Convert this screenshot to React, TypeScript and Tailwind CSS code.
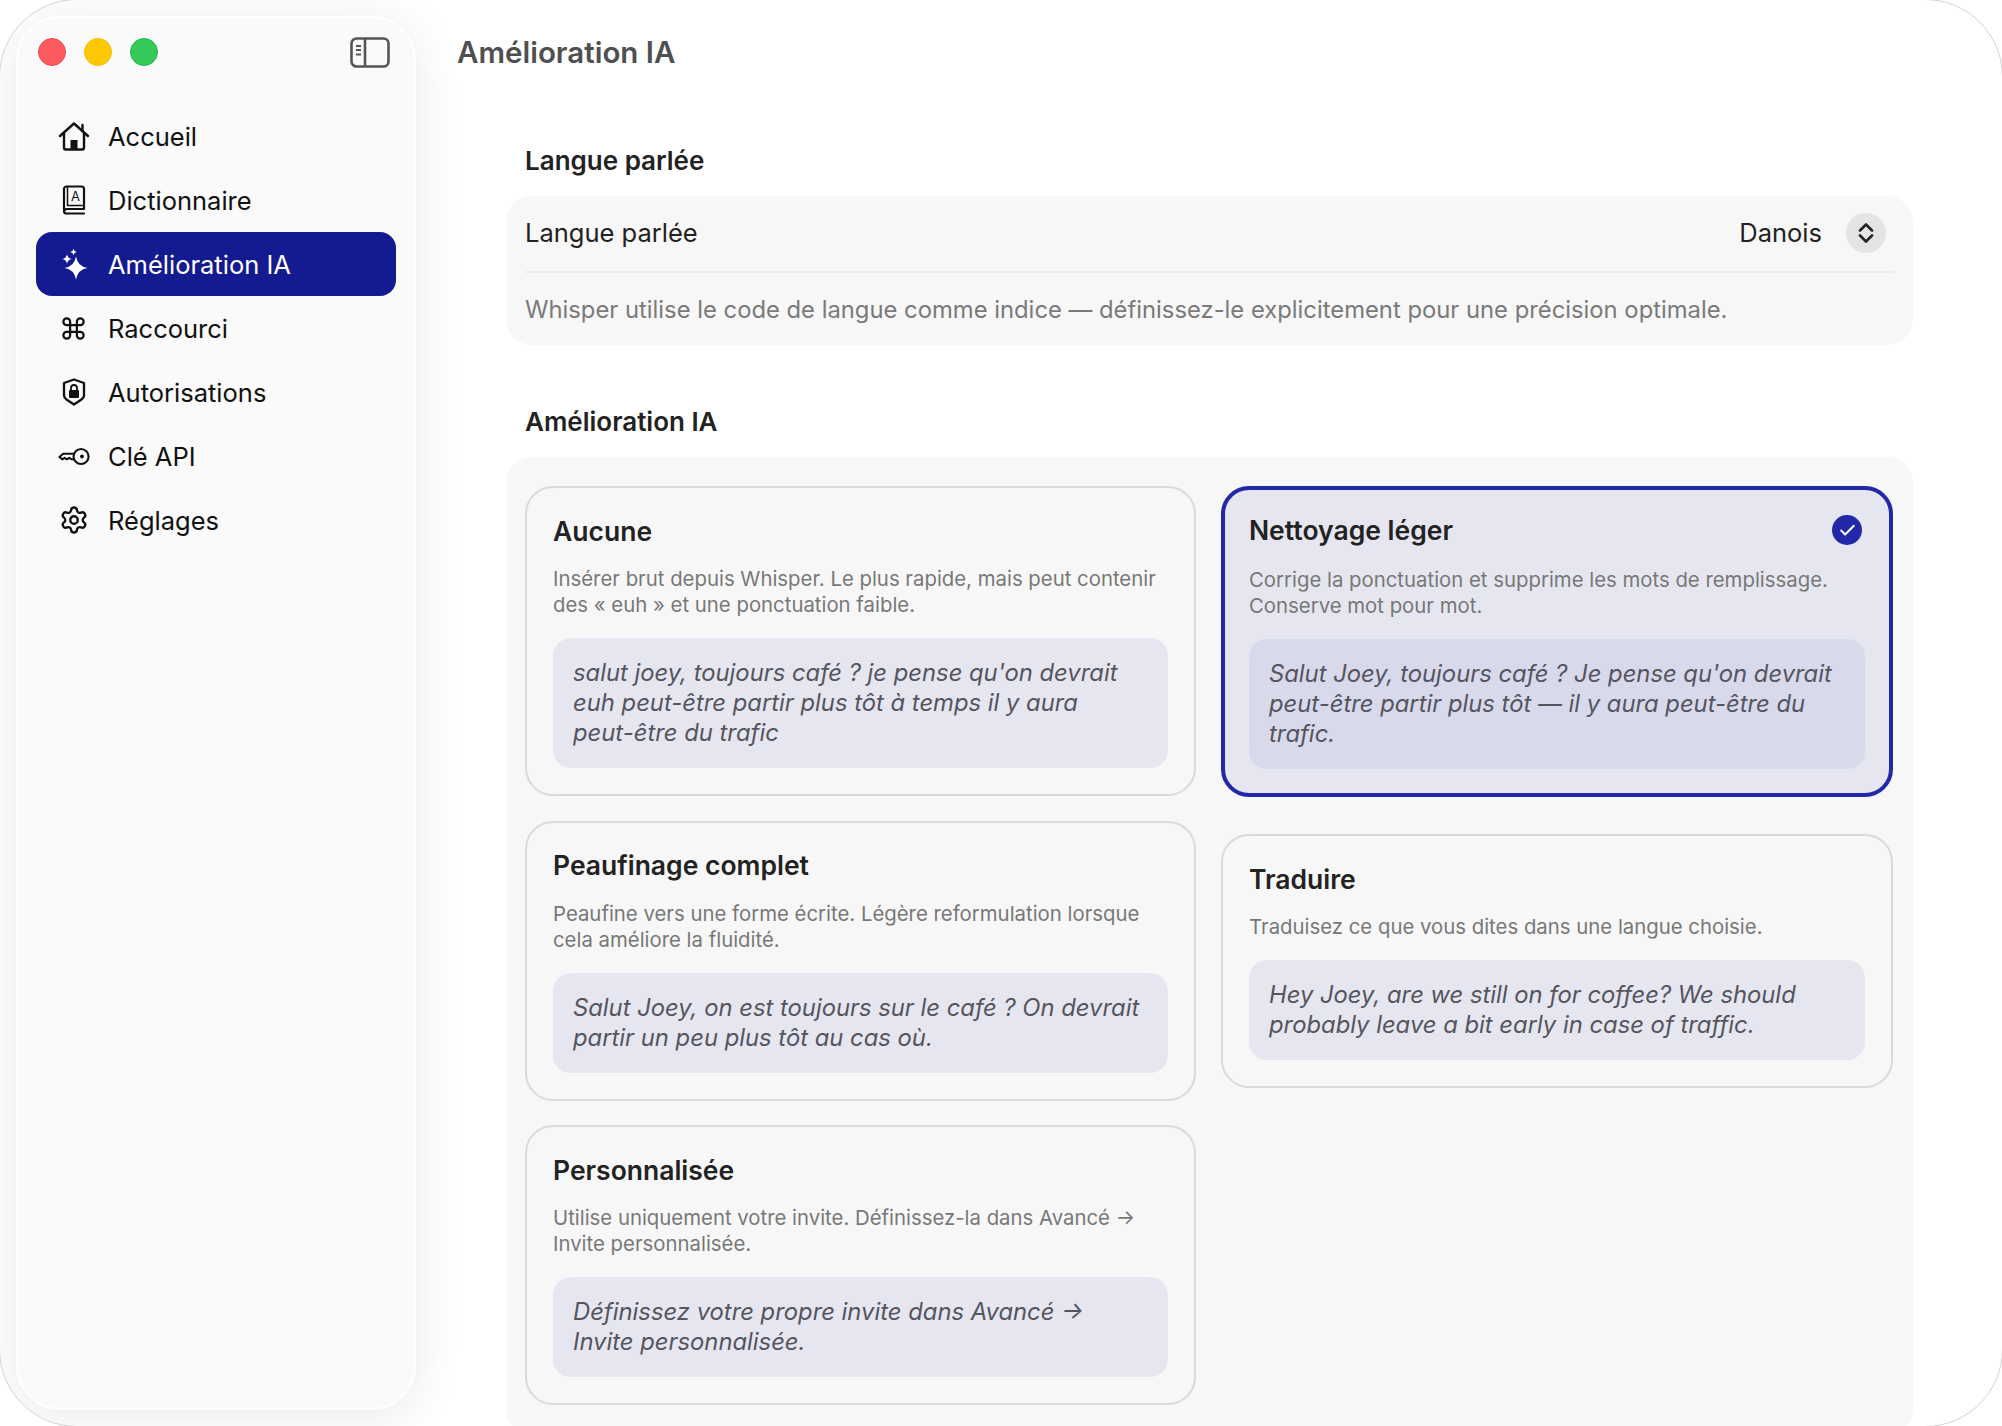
import type { ReactNode } from "react";
import { Check, Command, Settings } from "lucide-react";

function HomeIcon() {
  return (
    <svg width="32" height="30" viewBox="0 0 32 30" fill="none" stroke="currentColor" strokeWidth="2.4" strokeLinecap="round" strokeLinejoin="round">
      <path d="M2 15 16 2.500 30 15" />
      <path d="M24.500 4v6" />
      <path d="M6 12v14.500a2 2 0 0 0 2 2h16a2 2 0 0 0 2-2V12" />
      <rect x="12.500" y="19" width="7" height="9.500" fill="currentColor" stroke="none" />
    </svg>
  );
}

function BookIcon() {
  return (
    <svg width="24" height="30" viewBox="0 0 24 30" fill="none" stroke="currentColor" strokeWidth="2.200" strokeLinecap="round" strokeLinejoin="round">
      <path d="M2 25V4a2.500 2.500 0 0 1 2.500-2.500h15A2.500 2.500 0 0 1 22 4v20H5a3 3 0 0 0-3 2.500A2.500 2.500 0 0 0 4.500 28.500H22" />
      <path d="M5.500 2v18.500H22" strokeWidth="1.500" />
      <text x="13.500" y="16" fontSize="13" fontFamily="Inter, sans-serif" textAnchor="middle" fill="currentColor" stroke="none">
        A
      </text>
    </svg>
  );
}

function star(cx: number, cy: number, r: number) {
  const k = r * 0.14;
  return `M${cx} ${cy - r}Q${cx + k} ${cy - k} ${cx + r} ${cy}Q${cx + k} ${cy + k} ${cx} ${cy + r}Q${cx - k} ${cy + k} ${cx - r} ${cy}Q${cx - k} ${cy - k} ${cx} ${cy - r}Z`;
}

function SparkleIcon() {
  return (
    <svg width="30" height="32" viewBox="0 0 30 32" fill="currentColor">
      <path d={star(17, 20, 11.500)} />
      <path d={star(8, 11, 4.800)} />
      <path d={star(14.500, 4, 3.300)} />
    </svg>
  );
}

function ShieldIcon() {
  return (
    <svg width="24" height="28" viewBox="0 0 24 28" fill="none" stroke="currentColor" strokeWidth="2.300" strokeLinejoin="round">
      <path d="M12 1.500 22 5v12.500c0 2-1 3-2.500 4L12 26.500l-7.500-5C3 20.500 2 19.500 2 17.500V5Z" />
      <rect x="7" y="12" width="10" height="8" rx="1" fill="currentColor" stroke="none" />
      <path d="M9 12.500V10a3 3 0 0 1 6 0v2.500" strokeWidth="1.800" />
    </svg>
  );
}

function KeyIcon() {
  return (
    <svg width="32" height="19" viewBox="0 0 34 20" fill="none" stroke="currentColor" strokeWidth="2.200" strokeLinecap="round" strokeLinejoin="round">
      <circle cx="24.500" cy="10" r="8" />
      <circle cx="25.500" cy="10" r="2" fill="currentColor" stroke="none" />
      <path d="M17 7H5.500L1.500 10.500l3 2.500 2.500-1.500 2.500 1.500 2.500-1.500 2.500 1.500H17" />
    </svg>
  );
}

function PanelToggleIcon() {
  return (
    <svg width="40" height="31" viewBox="0 0 40 31" fill="none" stroke="#555555" strokeWidth="2.600" strokeLinejoin="round">
      <rect x="1.500" y="1.500" width="37" height="28" rx="5" />
      <path d="M15 1.500v28" />
      <path d="M6 9h5M6 13h5M6 17.500h5" strokeWidth="2" />
    </svg>
  );
}

const navItems = [
  { label: "Accueil", icon: <HomeIcon /> },
  { label: "Dictionnaire", icon: <BookIcon /> },
  { label: "Amélioration IA", icon: <SparkleIcon />, active: true },
  { label: "Raccourci", icon: <Command size={27} strokeWidth={2} /> },
  { label: "Autorisations", icon: <ShieldIcon /> },
  { label: "Clé API", icon: <KeyIcon /> },
  { label: "Réglages", icon: <Settings size={30} strokeWidth={1.9} /> },
];

function Sidebar() {
  return (
    <aside className="relative z-10 m-[16px] flex h-[1394px] w-[400px] shrink-0 flex-col rounded-[44px] border-2 border-white bg-[#fafafa] px-[18px] shadow-[0_6px_50px_rgba(0,0,0,0.09)]">
      <div className="h-[86px] pl-[2px] pr-[6px] pt-[20px]">
        <div className="flex h-[28px] items-center">
          <div className="flex gap-[18px]">
            <span className="h-[28px] w-[28px] rounded-full border border-[#e9474a] bg-[#ff5a5f]" />
            <span className="h-[28px] w-[28px] rounded-full border border-[#f0bc00] bg-[#fdc800]" />
            <span className="h-[28px] w-[28px] rounded-full border border-[#22b54a] bg-[#34c759]" />
          </div>
          <div className="ml-auto flex">
            <PanelToggleIcon />
          </div>
        </div>
      </div>
      {navItems.map((item) => (
        <div
          key={item.label}
          className={
            item.active
              ? "flex h-[64px] items-center rounded-[16px] bg-[#141a8f] text-white"
              : "flex h-[64px] items-center rounded-[16px] text-[#111111]"
          }
        >
          <div className="flex w-[72px] shrink-0 justify-center pl-[3px]">{item.icon}</div>
          <span className="pt-[2px] text-[25.500px] leading-[32px]">{item.label}</span>
        </div>
      ))}
    </aside>
  );
}

interface ModeCardProps {
  title: string;
  description: string;
  sample: ReactNode;
  selected?: boolean;
}

function ModeCard({ title, description, sample, selected }: ModeCardProps) {
  return (
    <div
      className={
        selected
          ? "relative rounded-[28px] border-[4px] border-[#2228a8] bg-[#e6e6f0] px-[24px] pb-[24px] pt-[24px]"
          : "relative rounded-[28px] border-2 border-[#dadada] bg-[#f7f7f7] px-[26px] pb-[26px] pt-[26.500px]"
      }
    >
      <h3 className="text-[26.500px] font-semibold leading-[32px] text-[#222222]">{title}</h3>
      {selected && (
        <span className="absolute right-[27px] top-[25px] flex h-[30px] w-[30px] items-center justify-center rounded-full bg-[#2228a8] text-white">
          <Check size={19} strokeWidth={2.4} />
        </span>
      )}
      <p className={selected ? "mt-[21px] text-[20.350px] leading-[26px] text-[#777777]" : "mt-[19.500px] text-[20.350px] leading-[26px] text-[#777777]"}>
        {description}
      </p>
      <div className={selected ? "mt-[20px] rounded-[18px] bg-[#d8d9eb] p-[20px]" : "mt-[20px] rounded-[18px] bg-[#e6e6f0] p-[20px]"}>
        <p className="text-[23.800px] italic leading-[30px] text-[#55555f]">{sample}</p>
      </div>
    </div>
  );
}

export default function App() {
  return (
    <div className="h-[1426px] w-[2002px] overflow-hidden bg-white font-['Inter',sans-serif]">
      <div className="-m-px flex h-[1428px] w-[2004px] overflow-hidden rounded-[78px] border border-[#d2d2d2] bg-white">
        <Sidebar />
        <main className="min-w-0 flex-1">
          <h1 className="flex h-[104px] items-center pl-[25px] text-[29.500px] font-semibold text-[#4f4f4f]">Amélioration IA</h1>
          <div className="ml-[74px] mr-[89px]">
            <h2 className="pl-[19px] pt-[41px] text-[26px] font-semibold leading-[32px] text-[#222222]">Langue parlée</h2>
            <section className="mt-[19px] rounded-[26px] bg-[#f7f7f7] px-[19px]">
              <div className="flex h-[77px] items-center border-b-2 border-[#ececec] pb-[1px]">
                <span className="text-[25.500px] text-[#222222]">Langue parlée</span>
                <span className="ml-auto text-[25.500px] text-[#222222]">Danois</span>
                <span className="ml-[24px] mr-[8px] flex h-[40px] w-[40px] items-center justify-center rounded-full bg-[#e4e4e4]">
                  <svg width="16" height="20" viewBox="0 0 16 20" fill="none" stroke="#222222" strokeWidth="2.600" strokeLinecap="round" strokeLinejoin="round">
                    <path d="M2 7.500 8 1.500l6 6" />
                    <path d="M2 12.500l6 6 6-6" />
                  </svg>
                </span>
              </div>
              <p className="flex h-[72px] items-center pt-[1px] text-[23.800px] text-[#7a7a7a]">
                Whisper utilise le code de langue comme indice — définissez-le explicitement pour une précision optimale.
              </p>
            </section>
            <h2 className="pl-[19px] pt-[61px] text-[26px] font-semibold leading-[32px] text-[#222222]">Amélioration IA</h2>
            <section className="mt-[19px] flex gap-[25px] rounded-[26px] bg-[#f7f7f7] px-[19px] pb-[30px] pt-[29px]">
              <div className="flex w-[671px] flex-col gap-[24.500px]">
                <ModeCard
                  title="Aucune"
                  description="Insérer brut depuis Whisper. Le plus rapide, mais peut contenir des « euh » et une ponctuation faible."
                  sample={
                    <>
                      salut joey, toujours café ? je pense qu'on devrait euh peut-être partir plus tôt à temps il y aura{" "}
                      <span className="whitespace-nowrap">peut-être</span> du trafic
                    </>
                  }
                />
                <ModeCard
                  title="Peaufinage complet"
                  description="Peaufine vers une forme écrite. Légère reformulation lorsque cela améliore la fluidité."
                  sample="Salut Joey, on est toujours sur le café ? On devrait partir un peu plus tôt au cas où."
                />
                <ModeCard
                  title="Personnalisée"
                  description="Utilise uniquement votre invite. Définissez-la dans Avancé → Invite personnalisée."
                  sample="Définissez votre propre invite dans Avancé → Invite personnalisée."
                />
              </div>
              <div className="flex w-[672px] flex-col items-stretch gap-[37px]">
                <ModeCard
                  selected
                  title="Nettoyage léger"
                  description="Corrige la ponctuation et supprime les mots de remplissage. Conserve mot pour mot."
                  sample="Salut Joey, toujours café ? Je pense qu'on devrait peut-être partir plus tôt — il y aura peut-être du trafic."
                />
                <ModeCard
                  title="Traduire"
                  description="Traduisez ce que vous dites dans une langue choisie."
                  sample="Hey Joey, are we still on for coffee? We should probably leave a bit early in case of traffic."
                />
              </div>
            </section>
          </div>
        </main>
      </div>
    </div>
  );
}
